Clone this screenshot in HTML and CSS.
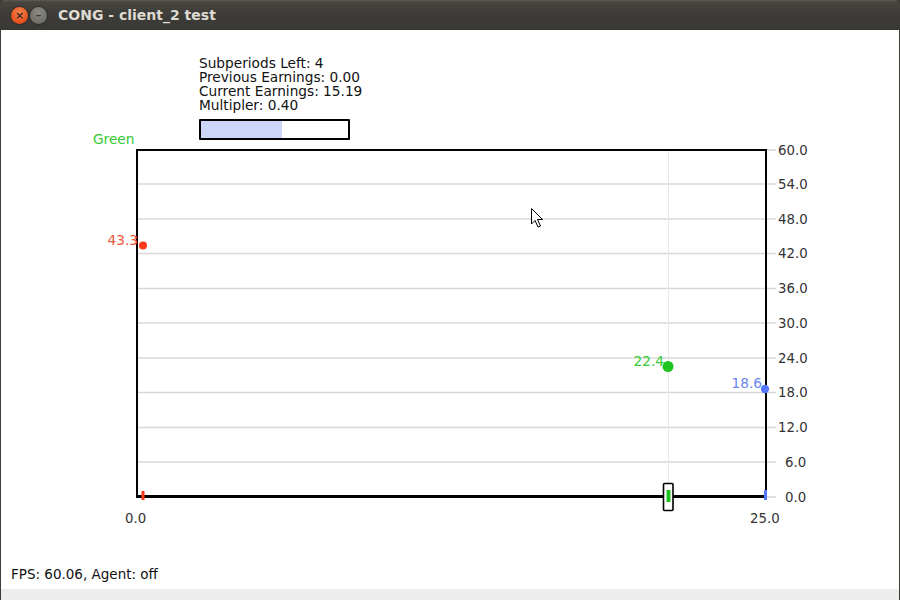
FILE: index.html
```html
<!DOCTYPE html>
<html>
<head>
<meta charset="utf-8">
<link rel="stylesheet" href="styles.css">
</head>
<body>
<div class="window">
  <div class="titlebar">
    <div class="btns">
      <span class="btn close">&#215;</span>
      <span class="btn min">&#8211;</span>
    </div>
    <div class="title">CONG - client_2 test</div>
  </div>
  <div class="content">
    <svg class="canvas" width="898" height="559" viewBox="1 30 898 559" xmlns="http://www.w3.org/2000/svg">
      <g class="grid">
        <line x1="136" y1="184" x2="776" y2="184"/>
        <line x1="136" y1="219" x2="776" y2="219"/>
        <line x1="136" y1="253.5" x2="776" y2="253.5"/>
        <line x1="136" y1="288.5" x2="776" y2="288.5"/>
        <line x1="136" y1="323" x2="776" y2="323"/>
        <line x1="136" y1="358" x2="776" y2="358"/>
        <line x1="136" y1="392.5" x2="776" y2="392.5"/>
        <line x1="136" y1="427.5" x2="776" y2="427.5"/>
        <line x1="136" y1="462" x2="776" y2="462"/>
        <line x1="766" y1="150" x2="776" y2="150"/>
        <line x1="766" y1="497" x2="776" y2="497"/>
      </g>
      <line class="vgrid" x1="668.5" y1="150" x2="668.5" y2="496"/>
      <path class="frame" d="M137 497 V150 H766 V497"/>
      <line class="axis" x1="136" y1="496.5" x2="767" y2="496.5"/>
      <g class="ylabels">
        <text x="778" y="155">60.0</text>
        <text x="778" y="189">54.0</text>
        <text x="778" y="224">48.0</text>
        <text x="778" y="258">42.0</text>
        <text x="778" y="293">36.0</text>
        <text x="778" y="328">30.0</text>
        <text x="778" y="363">24.0</text>
        <text x="778" y="397">18.0</text>
        <text x="778" y="432">12.0</text>
        <text x="785" y="467">6.0</text>
        <text x="785" y="502">0.0</text>
      </g>
      <text class="xlabel" x="125" y="523">0.0</text>
      <text class="xlabel" x="750" y="523">25.0</text>
      <text class="lbl green" x="93" y="144">Green</text>
      <text class="lbl red" x="138" y="245" text-anchor="end">43.3</text>
      <text class="lbl green" x="664" y="366" text-anchor="end">22.4</text>
      <text class="lbl blue" x="762" y="388" text-anchor="end">18.6</text>
      <circle cx="143" cy="245.5" r="4" fill="#ff3a1a"/>
      <circle cx="668" cy="366.5" r="5.5" fill="#1ec41e"/>
      <circle cx="765" cy="389" r="4.2" fill="#5577ff"/>
      <rect x="141.5" y="491" width="3" height="9" fill="#ff3a1a"/>
      <rect x="663.5" y="483.5" width="9.5" height="27" fill="#fff" stroke="#000" stroke-width="1.6" rx="1"/>
      <rect x="666.5" y="490" width="4" height="12" fill="#1ec41e"/>
      <rect x="764" y="490" width="3" height="10" fill="#5577ff"/>
      <path class="cursor" d="M531.5 208.5 V224 L535 220.5 L538 227 L540.5 226 L537.5 219.5 L542.5 219.5 Z"/>
    </svg>
    <div class="info">
      <div class="line">Subperiods Left: 4</div>
      <div class="line">Previous Earnings: 0.00</div>
      <div class="line">Current Earnings: 15.19</div>
      <div class="line">Multipler: 0.40</div>
      <div class="bar"><div class="fill" style="width:55%"></div></div>
    </div>
    <div class="fps">FPS: 60.06, Agent: off</div>
  </div>
  <div class="footer"></div>
</div>
</body>
</html>
```
FILE: styles.css
```css
html, body {
  margin: 0;
  padding: 0;
  background: #ffffff;
}
body {
  width: 900px;
  height: 600px;
  overflow: hidden;
  font-family: "DejaVu Sans", sans-serif;
}
.window {
  width: 900px;
  height: 600px;
  display: flex;
  flex-direction: column;
  background: #3c3b37;
}
.titlebar {
  height: 30px;
  flex: none;
  display: flex;
  align-items: center;
  border-radius: 5px 5px 0 0;
  background: linear-gradient(#5b5a55 0, #46453f 2px, #3e3d39 12px, #393834 100%);
}
.btns {
  display: flex;
  gap: 2px;
  padding-left: 11px;
  width: 47px;
}
.btn {
  width: 17px;
  height: 17px;
  border-radius: 50%;
  display: flex;
  align-items: center;
  justify-content: center;
  font-size: 11px;
  font-weight: bold;
  line-height: 1;
  color: #3b2a20;
  box-shadow: 0 0 0 1px #2e2d2a;
}
.close {
  background: radial-gradient(circle at 50% 35%, #f7844f, #e4501c 70%, #c43d10);
}
.min {
  background: radial-gradient(circle at 50% 35%, #8c8b86, #6f6e69 70%, #5c5b57);
  color: #3a3935;
}
.title {
  color: #dfdbd2;
  font-weight: bold;
  font-size: 14px;
}
.content {
  position: relative;
  height: 559px;
  flex: none;
  margin: 0 1px;
  background: #ffffff;
  display: flex;
  flex-direction: column;
}
.canvas {
  position: absolute;
  left: 0;
  top: 0;
}
.grid line {
  stroke: #d8d8d8;
  stroke-width: 1.6;
}
.vgrid {
  stroke: #e8e8e8;
  stroke-width: 1;
}
.frame {
  fill: none;
  stroke: #000;
  stroke-width: 2;
}
.axis {
  stroke: #000;
  stroke-width: 3;
}
.ylabels text, .xlabel {
  font-family: "DejaVu Sans", sans-serif;
  font-size: 13.3px;
  fill: #333333;
}
.lbl {
  font-family: "DejaVu Sans", sans-serif;
  font-size: 13.7px;
}
.lbl.green { fill: #33cc33; }
.lbl.red { fill: #f0583a; }
.lbl.blue { fill: #6a86f0; }
.cursor {
  fill: #fff;
  stroke: #000;
  stroke-width: 1;
  stroke-linejoin: round;
}
.info {
  position: relative;
  padding: 26px 0 0 198px;
  font-size: 13.7px;
  color: #111;
}
.line {
  height: 14px;
  line-height: 14px;
}
.bar {
  margin-top: 7px;
  width: 147px;
  height: 17px;
  border: 2px solid #000;
  border-radius: 1px;
  background: #fff;
}
.fill {
  height: 100%;
  background: #cdd5f8;
}
.fps {
  position: relative;
  margin-top: auto;
  padding: 0 0 7px 10px;
  font-size: 13.5px;
  line-height: 15px;
  color: #111;
}
.footer {
  height: 11px;
  flex: none;
  margin: 0 1px;
  background: #ededed;
}
```
